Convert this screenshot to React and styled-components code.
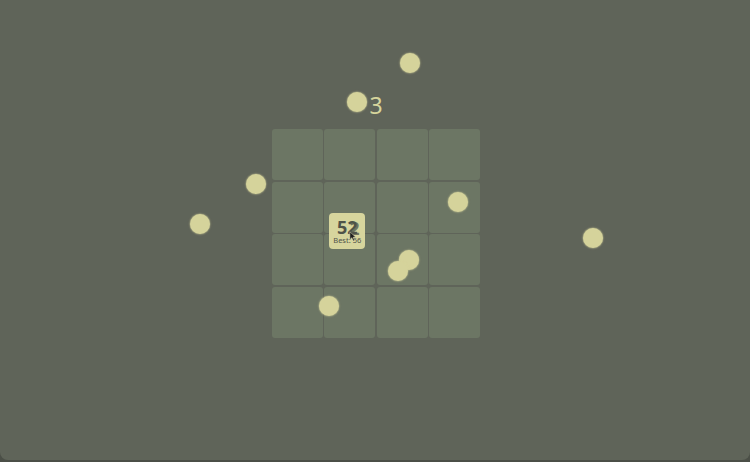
import React from 'react'
import styled, { createGlobalStyle } from 'styled-components';

const GlobalStyle = createGlobalStyle`
  html, body {
    margin: 0;
    padding: 0;
    background-color: #4b4f47;
    overflow: hidden;
  }
  * {
    box-sizing: border-box;
  }
`

const balls = [
  { x: 410, y: 63 },
  { x: 357, y: 102 },
  { x: 256, y: 184 },
  { x: 200, y: 224 },
  { x: 458, y: 202 },
  { x: 593, y: 238 },
  { x: 409, y: 260 },
  { x: 398, y: 271 },
  { x: 329, y: 306 },
];

const cells = Array.from({ length: 16 }, (_, i) => i);

const App = () => {
  return (
    <>
      <GlobalStyle />
      <Stage>
        <Board>
          <Score>3</Score>
          <Grid>
            {cells.map((i) => (
              <Cell key={i}>
                {i === 5 && (
                  <Tile>
                    <TileValue>
                      52
                      <GhostDigit>2</GhostDigit>
                    </TileValue>
                    <Best>Best: 56</Best>
                    <Pointer viewBox="0 0 10 14">
                      <path d="M1 1 L1 11 L3.5 8.6 L5.4 12.8 L7 12 L5.2 8 L8.6 8 Z" fill="#1e1e1e" stroke="#e8e6c0" strokeWidth="0.6" />
                    </Pointer>
                  </Tile>
                )}
              </Cell>
            ))}
          </Grid>
        </Board>

        {balls.map((b, i) => (
          <Ball key={i} style={{ left: b.x - 10, top: b.y - 10 }} />
        ))}
      </Stage>
    </>
  );
};

export default App;

const Stage = styled.div`
  position: relative;
  width: 750px;
  height: 460px;

  border-radius: 0 0 8px 8px;
  background-color: #5f6459;
  font-family: "Noto Sans", "Liberation Sans", sans-serif;
`
const Board = styled.div`
  display: flex;
  flex-direction: column;
  align-items: center;

  padding-top: 91px;
  padding-left: 4px;
`
const Score = styled.div`
  height: 38px;
  margin-right: 2px;

  font-size: 23px;
  line-height: 28px;
  color: #d6d49c;
`
const Grid = styled.div`
  display: grid;
  grid-template-columns: repeat(4, 51px);
  grid-template-rows: repeat(4, 51px);
  gap: 1.5px;

  margin-left: -2px;
`
const Cell = styled.div`
  position: relative;
  border-radius: 3px;
  background-color: #6c7664;
`
const Tile = styled.div`
  position: absolute;
  left: 5px;
  top: 31px;
  width: 36px;
  height: 36px;

  display: flex;
  flex-direction: column;
  align-items: center;
  justify-content: center;

  border-radius: 4px;
  background-color: #d7d59d;
  color: #4f5349;
  z-index: 2;
`
const TileValue = styled.div`
  position: relative;
  margin-top: 2px;

  font-size: 18px;
  font-weight: 700;
  line-height: 16px;
`
const GhostDigit = styled.span`
  position: absolute;
  right: -2px;
  top: 1px;
  opacity: 0.75;
`
const Best = styled.div`
  font-size: 7.5px;
  line-height: 10px;
  white-space: nowrap;
`
const Pointer = styled.svg`
  position: absolute;
  left: 20px;
  top: 18px;
  width: 8px;
  height: 11px;
`
const Ball = styled.div`
  position: absolute;
  width: 20px;
  height: 20px;

  border-radius: 50%;
  background-color: #d5d39b;
  box-shadow: 0 0 1.5px 0.5px rgba(213, 211, 155, 0.6);
  z-index: 3;
`
